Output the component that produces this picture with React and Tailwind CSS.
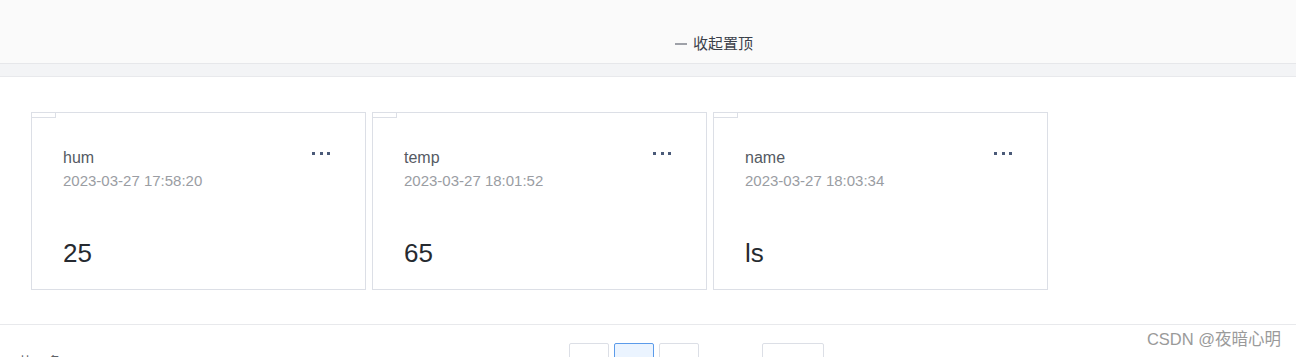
const cards = [
  { name: "hum", time: "2023-03-27 17:58:20", value: "25" },
  { name: "temp", time: "2023-03-27 18:01:52", value: "65" },
  { name: "name", time: "2023-03-27 18:03:34", value: "ls" },
];

function Card({ name, time, value }) {
  return (
    <div className="relative w-[335px] h-[178px] border border-[#dcdfe6] bg-white pl-[31px] pr-[35px] pt-[33px]">
      <div className="absolute left-0 top-0 w-[24px] h-[5px] border-r border-b border-[#dcdfe6]" />
      <div className="flex justify-between items-start">
        <div className="text-[16px] leading-[24px] text-[#555a63]">{name}</div>
        <div className="flex gap-[4.5px] mt-[6px]">
          <span className="w-[3px] h-[3px] bg-[#4a5a78]" />
          <span className="w-[3px] h-[3px] bg-[#4a5a78]" />
          <span className="w-[3px] h-[3px] bg-[#4a5a78]" />
        </div>
      </div>
      <div className="text-[15px] leading-[22px] text-[#9a9da3]">{time}</div>
      <div className="mt-[43px] text-[26px] leading-[36px] text-[#262a30]">{value}</div>
    </div>
  );
}

export default function App() {
  return (
    <div className="relative w-full h-[357px] overflow-hidden bg-white font-['Liberation_Sans','Noto_Sans_CJK_SC',sans-serif]">
      <div className="h-[64px] bg-[#fafafa] border-b border-[#e6e7ea] flex items-end justify-center pl-[132px] pb-[9px]">
        <div className="flex items-center h-[20px] text-[15px] text-[#3a3f4a]">
          <span className="w-[12px] h-[2px] bg-[#9ea1a8] mr-[6px]" />
          <span className="leading-[20px]">收起置顶</span>
        </div>
      </div>
      <div className="h-[13px] bg-[#f3f4f6] border-b border-[#e8e9ec]" />

      <div className="pt-[35px] pb-[34px] pl-[31px] border-b border-[#e8e9ec]">
        <div className="flex gap-[6px]">
          {cards.map((c) => (
            <Card key={c.name} {...c} />
          ))}
        </div>
      </div>

      <div className="flex items-start pt-[18px]">
        <div className="w-[569px] pl-[18px] mt-[9px] text-[14px] leading-[20px] text-[#606266]">
          共 3 条
        </div>
        <div className="flex gap-[5px]">
          <div className="w-[40px] h-[32px] rounded-[2px] border border-[#dcdfe6] bg-white" />
          <div className="w-[40px] h-[32px] rounded-[2px] border border-[#5b9bea] bg-[#ebf4ff]" />
          <div className="w-[40px] h-[32px] rounded-[2px] border border-[#dcdfe6] bg-white" />
        </div>
        <div className="ml-[63px] w-[62px] h-[32px] rounded-[2px] border border-[#dcdfe6] bg-white" />
      </div>

      <div className="absolute right-[15px] top-[329px] text-[16.5px] leading-[20px] text-[#9a9a9a]">
        CSDN @夜暗心明
      </div>
    </div>
  );
}
